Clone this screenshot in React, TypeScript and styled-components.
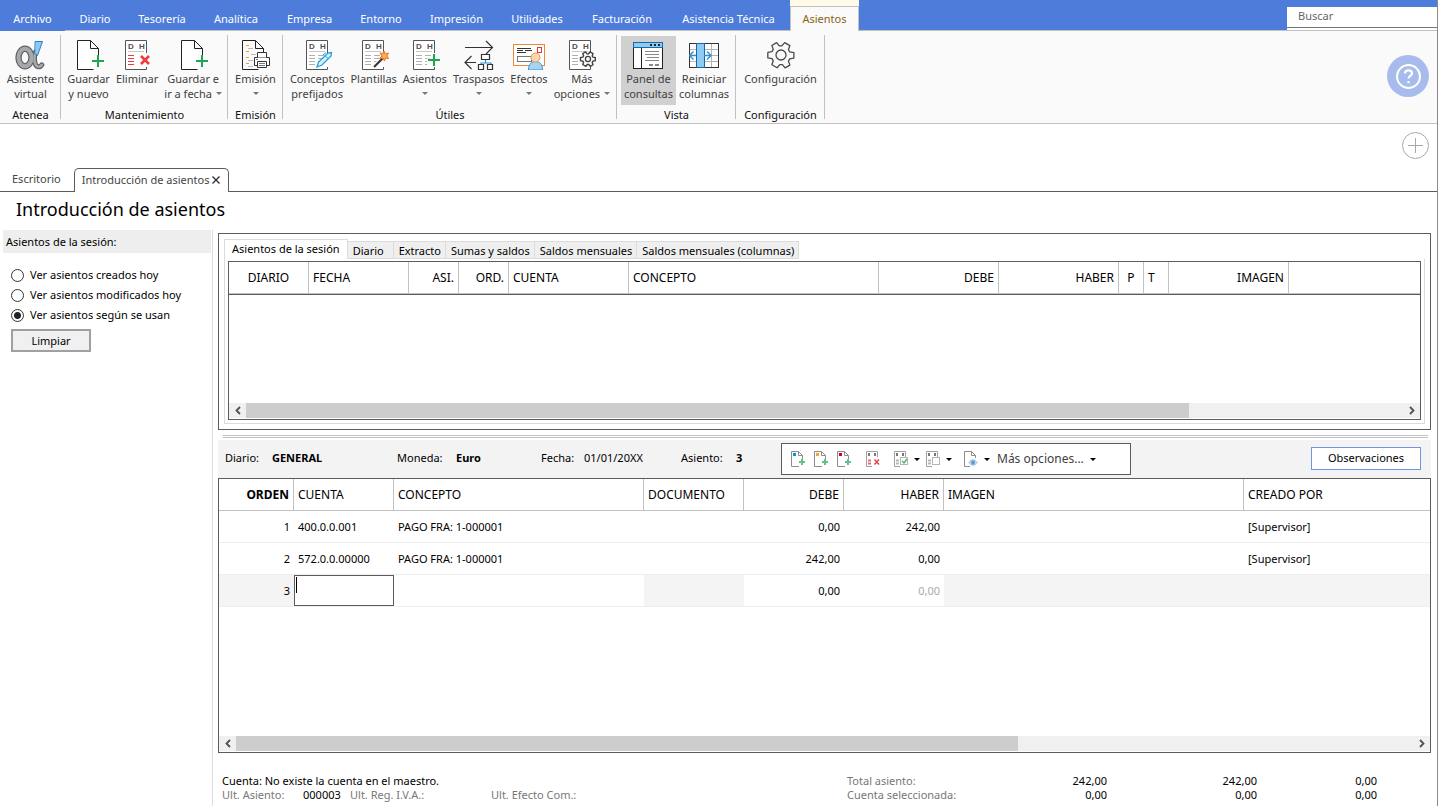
import React, { useState } from "react";
import styled, { createGlobalStyle, css } from "styled-components";

const FONT = '"Noto Sans", "Open Sans", sans-serif';
const BLUE = "#4d7cdb";
const DARK = "#5c5c5c";
const LINE = "#c1c1c1";
const SOFT = "#dcdcdc";

const Global = createGlobalStyle`
  * { box-sizing: border-box; }
  body { margin: 0; background: #fff; }
  button, input { font: inherit; color: inherit; }
  button { cursor: pointer; }
`;

const Page = styled.div`
  display: flex;
  flex-direction: column;
  min-height: 100vh;
  font: 11px/14px ${FONT};
  color: #000;
  background: #fff;
  border-right: 1px solid #8a8a8a;
  overflow: hidden;
`;

/* ---------- menu bar ---------- */

const MenuBar = styled.nav`
  display: flex;
  height: 31px;
  background: ${BLUE};
`;

const MenuTab = styled.button<{ $w: number; $file?: boolean }>`
  min-width: ${(p) => p.$w}px;
  border: 0;
  border-bottom: 1px solid ${(p) => (p.$file ? BLUE : LINE)};
  background: none;
  color: #fff;
  padding: 8px 12px 0;
  white-space: nowrap;
`;

const MenuSpace = styled.div`
  flex: 1;
  border-bottom: 1px solid ${LINE};
`;

const ActiveMenu = styled.div`
  display: flex;
  padding-top: 6px;
  background: #fffbe8;
`;

const ActiveTab = styled.button`
  min-width: 69px;
  border: 1px solid ${LINE};
  border-bottom: 0;
  background: #fafafa;
  color: #8a6414;
  padding: 0 11px;
`;

const SearchWrap = styled.div`
  width: 150px;
  padding-top: 7px;
  border-bottom: 1px solid ${LINE};
`;

const SearchInput = styled.input`
  display: block;
  width: 100%;
  height: 21px;
  border: 0;
  border-bottom: 1px solid #777;
  padding: 0 11px 3px;
  background: #fff;
  box-shadow: 0 2px 0 #fff;
  outline: 0;
  &::placeholder { color: #666; opacity: 1; }
`;

/* ---------- ribbon ---------- */

const Ribbon = styled.div`
  display: flex;
  height: 93px;
  background: #fafafa;
  border-bottom: 1px solid ${LINE};
`;

const Group = styled.section<{ $w: number }>`
  position: relative;
  display: flex;
  flex-direction: column;
  align-items: center;
  min-width: ${(p) => p.$w}px;
  padding: 5px 3px 0;
  &::after {
    content: "";
    position: absolute;
    right: 0;
    top: 4px;
    width: 1px;
    height: 84px;
    background: ${LINE};
  }
`;

const GroupButtons = styled.div`
  display: flex;
`;

const GroupName = styled.div`
  margin-top: 3px;
  color: #111;
  white-space: nowrap;
`;

const RibbonButton = styled.button<{ $on?: boolean }>`
  display: flex;
  flex-direction: column;
  align-items: center;
  height: 69px;
  border: 0;
  padding: 4px 3px 0;
  background: ${(p) => (p.$on ? "#d0d0d0" : "none")};
  color: #404040;
  line-height: 15px;
  white-space: nowrap;
`;

const IconBox = styled.span`
  display: flex;
  align-items: center;
  height: 30px;
  margin-bottom: 1px;
  svg { display: block; }
`;

const TextLine = styled.span`
  display: flex;
  align-items: center;
  gap: 4px;
  height: 15px;
`;

const Caret = styled.i<{ $c?: string }>`
  border: 3px solid transparent;
  border-top-color: ${(p) => p.$c || "#777"};
  border-bottom: 0;
`;

const Help = styled.button`
  align-self: center;
  margin: 0 8px 2px auto;
  width: 42px;
  height: 42px;
  padding: 0;
  border: 0;
  border-radius: 50%;
  background: #a7bcec;
  svg { display: block; margin: auto; }
`;

/* ---------- document tabs ---------- */

const AddRow = styled.div`
  display: flex;
  justify-content: flex-end;
  height: 44px;
  padding: 8px 8px 0;
`;

const AddButton = styled.button`
  width: 27px;
  height: 27px;
  padding: 0;
  border: 0;
  background: none;
  svg { display: block; }
`;

const DocTabs = styled.div`
  display: flex;
  height: 24px;
  color: #444;
`;

const DocTab = styled.button<{ $on?: boolean }>`
  display: flex;
  align-items: center;
  gap: 3px;
  padding: 0 13px 1px 12px;
  border: 0;
  border-bottom: 1px solid ${DARK};
  background: #fff;
  white-space: nowrap;
  ${(p) =>
    p.$on &&
    css`
      border: 1px solid ${DARK};
      border-bottom: 0;
      border-radius: 5px 5px 0 0;
      padding: 0 8px 2px 7px;
    `}
`;

const DocFill = styled.div`
  flex: 1;
  border-bottom: 1px solid ${DARK};
`;

const Title = styled.h1`
  margin: 0;
  padding: 5px 16px 9px;
  font-size: 18px;
  line-height: 24px;
  font-weight: 400;
`;

/* ---------- body ---------- */

const Body = styled.div`
  flex: 1;
  display: flex;
`;

const Side = styled.aside`
  width: 213px;
  flex: none;
  border-right: 1px solid ${SOFT};
  padding: 0 1px 0 3px;
`;

const SideTitle = styled.div`
  height: 23px;
  padding: 5px 3px;
  background: #eee;
  margin-bottom: 12px;
`;

const RadioLabel = styled.label`
  display: flex;
  align-items: center;
  gap: 6px;
  height: 20px;
  padding-left: 8px;
`;

const Radio = styled.input`
  appearance: none;
  width: 13px;
  height: 13px;
  margin: 0;
  border: 1px solid #333;
  border-radius: 50%;
  background: #fff;
  &:checked { background: radial-gradient(circle, #222 0 3px, #fff 4px); }
`;

const Clear = styled.button`
  display: block;
  width: 80px;
  height: 23px;
  margin: 4px 8px;
  padding: 0;
  border: 2px solid #a0a0a0;
  background: #f0f0f0;
`;

const Main = styled.main`
  flex: 1;
  min-width: 0;
  display: flex;
  flex-direction: column;
  padding: 3px 6px 4px 5px;
`;

const Panel = styled.section`
  display: flex;
  flex-direction: column;
  height: 197px;
  border: 1px solid ${DARK};
  padding: 5px;
`;

const PanelTabs = styled.div`
  display: flex;
  align-items: flex-end;
  height: 20px;
`;

const PanelTab = styled.button<{ $on?: boolean }>`
  height: 18px;
  padding: 1px 4px 0 5px;
  border: 1px solid ${SOFT};
  border-left: 0;
  background: #efefef;
  white-space: nowrap;
  min-width: 46px;
  text-align: left;
  ${(p) =>
    p.$on &&
    css`
      height: 20px;
      padding: 0 7px 2px;
      border-left: 1px solid ${SOFT};
      border-bottom: 0;
      background: #fff;
    `}
`;

const PanelPage = styled.div`
  flex: 1;
  display: flex;
  border: 1px solid ${SOFT};
  border-top: 0;
  padding: 2px 3px 3px;
  min-width: 0;
`;

const Grid = styled.div`
  flex: 1;
  min-width: 0;
  display: flex;
  flex-direction: column;
  border: 1px solid ${DARK};
  background: #fff;
`;

const GridView = styled.div`
  flex: 1;
  overflow: hidden;
`;

const Table = styled.table<{ $dark?: boolean }>`
  width: 100%;
  table-layout: fixed;
  border-collapse: separate;
  border-spacing: 0;
  line-height: 16px;
  thead th { box-shadow: ${(p) => (p.$dark ? `0 1px 0 ${DARK}` : "none")}; }
`;

type Align = "left" | "right" | "center";

const Th = styled.th<{ $a?: Align; $bold?: boolean }>`
  height: 32px;
  padding: 0 4px;
  border-bottom: 1px solid ${LINE};
  border-right: 1px solid ${LINE};
  text-align: ${(p) => p.$a || "left"};
  font-size: 12px;
  font-weight: ${(p) => (p.$bold ? 700 : 400)};
  white-space: nowrap;
  &:last-child { border-right: 0; }
`;

const Td = styled.td<{ $a?: Align; $bg?: string; $flush?: boolean; $dim?: boolean }>`
  height: 32px;
  padding: ${(p) => (p.$flush ? "0" : "0 4px")};
  border-bottom: 1px solid #eee;
  text-align: ${(p) => p.$a || "left"};
  background: ${(p) => p.$bg || "#fff"};
  color: ${(p) => (p.$dim ? "#aaa" : "#000")};
  white-space: nowrap;
`;

const CellEdit = styled.div`
  display: flex;
  height: 31px;
  border: 1px solid ${DARK};
  padding: 1px;
`;

const TextCursor = styled.span`
  width: 1px;
  height: 16px;
  background: #000;
`;

const CellInput = styled.input`
  flex: 1;
  min-width: 0;
  border: 0;
  padding: 0;
  outline: 0;
`;

const Scroll = styled.div`
  display: flex;
  height: 16px;
  background: #f0f0f0;
  border-bottom: 1px solid #fff;
`;

const ScrollButton = styled.button`
  width: 17px;
  padding: 0;
  border: 0;
  background: none;
  svg { display: block; margin: auto; }
`;

const Track = styled.div`
  flex: 1;
`;

const Thumb = styled.div<{ $w: number }>`
  width: ${(p) => p.$w}%;
  height: 100%;
  background: #cdcdcd;
`;

const Splitter = styled.div`
  height: 3px;
  margin: 5px 3px 2px 5px;
  border: 1px solid ${LINE};
  border-width: 1px 0;
`;

const EntryBar = styled.div`
  display: grid;
  grid-template-columns: 47px 125px 59px 85px 43px 97px 55px 45px 350px 1fr;
  align-items: center;
  height: 38px;
  padding: 0 10px 2px 7px;
  background: #f3f3f3;
`;

const FieldName = styled.span``;

const FieldValue = styled.output<{ $plain?: boolean }>`
  font-weight: ${(p) => (p.$plain ? 400 : 700)};
`;

const Tools = styled.div`
  display: flex;
  align-items: center;
  height: 32px;
  margin-top: 2px;
  border: 1px solid ${DARK};
  background: #fff;
  padding-left: 9px;
`;

const Tool = styled.button<{ $gap: number }>`
  display: flex;
  align-items: center;
  gap: 6px;
  padding: 0;
  border: 0;
  background: none;
  margin-right: ${(p) => p.$gap}px;
  font-size: 12px;
  color: #404040;
  white-space: nowrap;
  svg { display: block; }
`;

const Notes = styled.button`
  justify-self: end;
  width: 110px;
  height: 23px;
  border: 1px solid #6f95e3;
  background: #fff;
  padding: 0;
`;

const Footer = styled.footer`
  display: grid;
  grid-template-columns: 81px 47px 141px 1fr 110px 150px 150px 120px;
  padding: 21px 54px 0 4px;
  color: #777;
`;

const Message = styled.span`
  grid-column: 1 / 5;
  color: #000;
`;

const Amount = styled.span`
  color: #000;
  text-align: right;
`;

const Black = styled.span`
  color: #000;
`;

/* ---------- drawings ---------- */

const G = "#1da653";
const K = "#404040";

const AlphaIcon = () => (
  <svg width="32" height="30" viewBox="0 0 32 30" fill="none" strokeLinecap="round">
    <g stroke="#5f6264">
      <ellipse cx="10" cy="17.500" rx="6.500" ry="8.800" strokeWidth="6.400" />
      <path d="M20.500 12c-1.500 5-1.500 8-.2 12 1 3 4.500 4 6.500.8" strokeWidth="5" />
    </g>
    <g stroke="#a6a9ab">
      <ellipse cx="10" cy="17.500" rx="6.500" ry="8.800" strokeWidth="4" />
      <path d="M20.500 12c-1.500 5-1.500 8-.2 12 1 3 4.500 4 6.500.8" strokeWidth="2.600" />
    </g>
    <path d="M20.500 1.500h7L22.500 15.500l-2.500-2z" fill="#8cc8f3" stroke="#2c7fbd" strokeLinejoin="round" />
  </svg>
);

const PageShape = ({ c = "#222" }: { c?: string }) => (
  <path d="M16.500 29.500H.5V.5h13l8 8V17M13.500.5v8h8" fill="none" stroke={c} />
);

const NewDocIcon = () => (
  <svg width="32" height="30" viewBox="-4 0 32 30">
    <rect x="1" y="1" width="16" height="28" fill="#fff" />
    <PageShape />
    <path d="M21 15v12M15 21h12" stroke={G} strokeWidth="2" />
  </svg>
);

const Ledger = ({ lines = "#b0b0b0" }: { lines?: string }) => (
  <>
    <rect x="1" y="1" width="20" height="28" fill="#fff" />
    <path d="M21.500 13V.5H.5v29h21V27" fill="none" stroke="#555" />
    <path d="M3 11.500h16" stroke="#c8c8c8" />
    <text x="3" y="9" fontSize="8" fontWeight="700" fontFamily='"Liberation Sans", sans-serif' fill="#505050">D</text>
    <text x="14" y="9" fontSize="8" fontWeight="700" fontFamily='"Liberation Sans", sans-serif' fill="#505050">H</text>
    <path d="M3 15.500h6M3 18.500h6M3 21.500h6M3 24.500h6" stroke={lines} />
  </>
);

const DeleteIcon = () => (
  <svg width="28" height="30" viewBox="-2 0 28 30">
    <Ledger lines="#ee3b3b" />
    <rect x="14" y="13" width="10" height="14" fill="#fafafa" />
    <path d="M16 16l8 8M24 16l-8 8" stroke="#ee3b3b" strokeWidth="2.600" />
  </svg>
);

const RightLines = () => <path d="M12 15.500h6M12 18.500h5M12 21.500h3M12 24.500h2" stroke="#b0b0b0" />;

const ConceptIcon = () => (
  <svg width="31" height="30" viewBox="-4 0 31 30">
    <Ledger />
    <RightLines />
    <path d="M11 27l1.500-5L22 13l3.500-.5-.5 3.500-9 9z" fill="#d8f0fd" stroke="#1f9fdc" strokeWidth="1.300" />
    <path d="M19 15.500l3.500 3.500M20 12.500l-3 2.500" stroke="#1f9fdc" />
  </svg>
);

const TemplateIcon = () => (
  <svg width="31" height="30" viewBox="-4 0 31 30">
    <Ledger />
    <RightLines />
    <path d="M12 27L21 18.500" stroke="#fafafa" strokeWidth="5" />
    <path d="M12 27L20.500 18.500" stroke="#333" strokeWidth="2" />
    <path d="M22 11l1.500 3 3-1-1.500 3 1.500 2.500-3-.5-1 3-1.500-3-3.500.5 2.500-2.500-2-3 3 .5z" fill="#fbb04a" stroke="#e8702a" />
  </svg>
);

const EntryIcon = () => (
  <svg width="31" height="30" viewBox="-4 0 31 30">
    <Ledger />
    <RightLines />
    <path d="M21 13v14M14 20.500h13" stroke="#fafafa" strokeWidth="4" />
    <path d="M21 14v12M15 20h12" stroke={G} strokeWidth="2" />
  </svg>
);

const TransferIcon = () => (
  <svg width="30" height="30" viewBox="0 0 30 30" fill="none" stroke="#333" strokeWidth="1.200">
    <path d="M1 7.500h27M22 1l6.500 6.500L22 14M7.500 16L1 22.500 7.500 29M1 22.500h11" />
    <path d="M21.500 20v3M17 24.500v-1.500h10v1.500" stroke="#2a8fd0" />
    <path d="M17.500 14.500h8v5h-8zM14.500 24.500h5v5h-5zM23.500 24.500h5v5h-5z" fill="#fff" />
  </svg>
);

const EffectsIcon = () => (
  <svg width="32" height="30" viewBox="0 0 32 30" fill="none">
    <rect x=".5" y="4.500" width="31" height="21" fill="#fff" stroke="#e98a35" />
    <path d="M4 8.500h14M4 10.500h6M12 10.500h7M4 12.500h9" stroke="#333" />
    <rect x="4.500" y="16.500" width="14" height="5" stroke="#777" />
    <rect x="24.500" y="7.500" width="4" height="5" stroke="#e33" />
    <path d="M15.500 30c0-6 3-8.500 7-8.500s7 2.500 7 8.500z" fill="#a9d3f3" stroke="#3c94d4" />
    <circle cx="22.500" cy="17.500" r="4.500" fill="#fbd7ac" stroke="#e0995b" />
  </svg>
);

const GEAR =
  "M11 1.500h6l.8 4.200 2.200 1.300 4-1.500 2.700 4.800-3.200 2.700v2.600l3.200 2.700-2.700 4.800-4-1.500-2.200 1.300-.8 4.100h-6l-.8-4.100-2.200-1.300-4 1.500-2.700-4.800 3.200-2.700v-2.600L1.300 10.300 4 5.500 8 7l2.200-1.300z";

const ConfigIcon = () => (
  <svg width="28" height="28" viewBox="0 0 28 28" fill="none" stroke="#4a4a4a" strokeWidth="1.300" strokeLinejoin="round">
    <path d={GEAR} transform="rotate(30 14 14)" />
    <circle cx="14" cy="14" r="5" />
  </svg>
);

const MoreIcon = () => (
  <svg width="29" height="30" viewBox="-2 0 29 30">
    <Ledger />
    <g transform="translate(11 11) scale(.57)">
      <path d={GEAR} transform="rotate(30 14 14)" fill="#fafafa" stroke={K} strokeWidth="2.400" />
      <circle cx="14" cy="14" r="4.500" fill="none" stroke={K} strokeWidth="2.200" />
    </g>
  </svg>
);

const PrintIcon = () => (
  <svg width="28" height="30" viewBox="0 0 28 30" fill="none">
    <PageShape />
    <path d="M4 5.500h3M4 11.500h3M4 17.500h3M4 23.500h3" stroke="#ee9a2e" />
    <path d="M6 8.500h5M9 14.500h5M6 20.500h5M6 26.500h5" stroke="#bbb" />
    <path d="M12.500 17.500h15v8h-15z" fill="#fff" stroke="#333" />
    <path d="M15.500 17.500v-5h9v5M15.500 21.500h9v6h-9z" fill="#fff" stroke="#333" />
    <path d="M17 23.500h6M17 25.500h6" stroke="#777" />
    <path d="M14 19.500h2" stroke="#2a8fd0" />
  </svg>
);

const PanelIcon = () => (
  <svg width="30" height="27" viewBox="0 0 30 27" fill="none">
    <rect x=".5" y=".5" width="29" height="26" fill="#fff" stroke="#222" />
    <rect x=".5" y=".5" width="29" height="5" fill="#8dcbf3" stroke="#1867ab" />
    <path d="M17 3h2M21 3h2M25 3h2" stroke="#222" strokeWidth="2" />
    <path d="M8.500 6v20" stroke="#222" />
    <path d="M12 9.500h14M12 12.500h14M14 15.500h12M12 18.500h14" stroke="#888" />
    <path d="M16 23h4M22 23h4" stroke="#888" strokeWidth="2" />
  </svg>
);

const ColumnsIcon = () => (
  <svg width="30" height="27" viewBox="0 0 30 27" fill="none">
    <rect x=".5" y="1.500" width="29" height="24" fill="#fff" stroke="#333" />
    <path d="M1 7.500h28M1 13.500h28M1 19.500h28M22.500 2v23" stroke="#b5b5b5" />
    <rect x="7.500" y="1.500" width="8" height="24" fill="#8dcbf3" stroke="#1867ab" />
    <path d="M7 13.500H1M4.500 9.500l-4 4 4 4M15 13.500h6M18 9.500l4 4-4 4" stroke="#2a8fd0" strokeWidth="1.400" />
  </svg>
);

const HelpIcon = () => (
  <svg width="27" height="27" viewBox="0 0 27 27" fill="none" stroke="#fff">
    <circle cx="13.500" cy="13.500" r="11.500" strokeWidth="2" />
    <path d="M10 10.500c0-2 1.500-3.200 3.500-3.200s3.500 1.200 3.500 3c0 2.700-3.500 2.500-3.500 5.200" strokeWidth="2.200" />
    <path d="M13.500 18v2.200" strokeWidth="2.200" />
  </svg>
);

const SmallNew = ({ c }: { c: string }) => (
  <svg width="14" height="16" viewBox="0 0 14 16" fill="none">
    <path d="M8 15.500H.5V.5h7l4 4V8M7.500.5v4h4" stroke="#8c8c8c" />
    <rect x="2" y="2" width="3" height="3" fill={c} />
    <path d="M11 8v6M8 11h6" stroke="#63c08a" strokeWidth="2" />
  </svg>
);

const SmallLedger = ({ red, children }: { red?: boolean; children: React.ReactNode }) => (
  <svg width="14" height="16" viewBox="0 0 14 16" fill="none">
    <path d="M6 15.500H.5V.5h11V6" stroke="#a0a0a0" />
    <path d="M3 2v3M9 2v3" stroke="#777" strokeWidth="2" />
    <path d="M2 9.500h3M2 12.500h3" stroke={red ? "#ee6a6a" : "#b5b5b5"} strokeWidth="2" />
    {children}
  </svg>
);

const EyeIcon = () => (
  <svg width="14" height="16" viewBox="0 0 14 16" fill="none">
    <path d="M6 15.500H.5V.5h7l4 4V7M7.500.5v4h4" stroke="#8c8c8c" />
    <path d="M5 11.500c2-3.500 6-3.500 8 0-2 3.500-6 3.500-8 0z" fill="#cfe3f4" stroke="#8fb6d8" />
    <circle cx="9" cy="11.500" r="2" fill="#5b9bd0" />
  </svg>
);

const Arrow = ({ right }: { right?: boolean }) => (
  <svg width="8" height="9" viewBox="0 0 8 9" fill="none" stroke="#505050" strokeWidth="1.800">
    <path d={right ? "M2 1l3.500 3.500L2 8" : "M6 1L2.500 4.500 6 8"} />
  </svg>
);

/* ---------- pieces ---------- */

interface CommandProps {
  icon: React.ReactNode;
  lines: string[];
  menu?: boolean;
  on?: boolean;
}

const Command = ({ icon, lines, menu, on }: CommandProps) => (
  <RibbonButton $on={on} aria-pressed={on}>
    <IconBox>{icon}</IconBox>
    {lines.map((l, i) => (
      <TextLine key={l}>
        {l}
        {menu && i === 1 && <Caret />}
      </TextLine>
    ))}
    {menu && lines.length === 1 && (
      <TextLine>
        <Caret />
      </TextLine>
    )}
  </RibbonButton>
);

const RibbonGroup = ({ name, w, children }: { name: string; w: number; children: React.ReactNode }) => (
  <Group $w={w} aria-label={name}>
    <GroupButtons>{children}</GroupButtons>
    <GroupName>{name}</GroupName>
  </Group>
);

const HScroll = ({ thumb }: { thumb: number }) => (
  <Scroll>
    <ScrollButton aria-label="Desplazar a la izquierda">
      <Arrow />
    </ScrollButton>
    <Track>
      <Thumb $w={thumb} />
    </Track>
    <ScrollButton aria-label="Desplazar a la derecha">
      <Arrow right />
    </ScrollButton>
  </Scroll>
);

interface Column {
  name: string;
  w?: number;
  a?: Align;
  bold?: boolean;
}

const Head = ({ cols }: { cols: Column[] }) => (
  <>
    <colgroup>
      {cols.map((c, i) => (
        <col key={i} width={c.w} />
      ))}
    </colgroup>
    <thead>
      <tr>
        {cols.map((c, i) => (
          <Th key={i} $a={c.a} $bold={c.bold}>
            {c.name}
          </Th>
        ))}
      </tr>
    </thead>
  </>
);

const MENUS = [
  { name: "Diario", w: 60 },
  { name: "Tesorería", w: 74 },
  { name: "Analítica", w: 74 },
  { name: "Empresa", w: 73 },
  { name: "Entorno", w: 70 },
  { name: "Impresión", w: 81 },
  { name: "Utilidades", w: 80 },
  { name: "Facturación", w: 90 },
  { name: "Asistencia Técnica", w: 123 },
];

const QUERY_TABS = ["Asientos de la sesión", "Diario", "Extracto", "Sumas y saldos", "Saldos mensuales", "Saldos mensuales (columnas)"];

const QUERY_COLS: Column[] = [
  { name: "DIARIO", w: 80, a: "center" },
  { name: "FECHA", w: 100 },
  { name: "ASI.", w: 50, a: "right" },
  { name: "ORD.", w: 50, a: "right" },
  { name: "CUENTA", w: 120 },
  { name: "CONCEPTO", w: 250 },
  { name: "DEBE", w: 120, a: "right" },
  { name: "HABER", w: 120, a: "right" },
  { name: "P", w: 25, a: "center" },
  { name: "T", w: 25 },
  { name: "IMAGEN", w: 120, a: "right" },
  { name: "" },
];

const ENTRY_COLS: Column[] = [
  { name: "ORDEN", w: 75, a: "right", bold: true },
  { name: "CUENTA", w: 100 },
  { name: "CONCEPTO", w: 250 },
  { name: "DOCUMENTO", w: 100 },
  { name: "DEBE", w: 100, a: "right" },
  { name: "HABER", w: 100, a: "right" },
  { name: "IMAGEN", w: 300 },
  { name: "CREADO POR" },
];

const ROWS = [
  { n: 1, account: "400.0.0.001", text: "PAGO FRA: 1-000001", debit: "0,00", credit: "242,00" },
  { n: 2, account: "572.0.0.00000", text: "PAGO FRA: 1-000001", debit: "242,00", credit: "0,00" },
];

const FILTERS = ["Ver asientos creados hoy", "Ver asientos modificados hoy", "Ver asientos según se usan"];

const GREY = "#f4f4f4";

export default function App() {
  const [filter, setFilter] = useState(2);

  return (
    <Page>
      <Global />
      <MenuBar>
        <MenuTab $w={65} $file>
          Archivo
        </MenuTab>
        {MENUS.map((m) => (
          <MenuTab key={m.name} $w={m.w}>
            {m.name}
          </MenuTab>
        ))}
        <ActiveMenu>
          <ActiveTab>Asientos</ActiveTab>
        </ActiveMenu>
        <MenuSpace />
        <SearchWrap>
          <SearchInput type="search" placeholder="Buscar" aria-label="Buscar" />
        </SearchWrap>
      </MenuBar>

      <Ribbon>
        <RibbonGroup name="Atenea" w={61}>
          <Command icon={<AlphaIcon />} lines={["Asistente", "virtual"]} />
        </RibbonGroup>
        <RibbonGroup name="Mantenimiento" w={167}>
          <Command icon={<NewDocIcon />} lines={["Guardar", "y nuevo"]} />
          <Command icon={<DeleteIcon />} lines={["Eliminar"]} />
          <Command icon={<NewDocIcon />} lines={["Guardar e", "ir a fecha"]} menu />
        </RibbonGroup>
        <RibbonGroup name="Emisión" w={55}>
          <Command icon={<PrintIcon />} lines={["Emisión"]} menu />
        </RibbonGroup>
        <RibbonGroup name="Útiles" w={334}>
          <Command icon={<ConceptIcon />} lines={["Conceptos", "prefijados"]} />
          <Command icon={<TemplateIcon />} lines={["Plantillas"]} />
          <Command icon={<EntryIcon />} lines={["Asientos"]} menu />
          <Command icon={<TransferIcon />} lines={["Traspasos"]} menu />
          <Command icon={<EffectsIcon />} lines={["Efectos"]} menu />
          <Command icon={<MoreIcon />} lines={["Más", "opciones"]} menu />
        </RibbonGroup>
        <RibbonGroup name="Vista" w={119}>
          <Command icon={<PanelIcon />} lines={["Panel de", "consultas"]} on />
          <Command icon={<ColumnsIcon />} lines={["Reiniciar", "columnas"]} />
        </RibbonGroup>
        <RibbonGroup name="Configuración" w={89}>
          <Command icon={<ConfigIcon />} lines={["Configuración"]} />
        </RibbonGroup>
        <Help aria-label="Ayuda">
          <HelpIcon />
        </Help>
      </Ribbon>

      <AddRow>
        <AddButton aria-label="Añadir">
          <svg width="27" height="27" viewBox="0 0 27 27" fill="none" stroke="#a8a8a8">
            <circle cx="13.500" cy="13.500" r="13" />
            <path d="M13.500 6v15M6 13.500h15" />
          </svg>
        </AddButton>
      </AddRow>
      <DocTabs>
        <DocTab>Escritorio</DocTab>
        <DocTab $on>
          Introducción de asientos
          <svg width="8" height="8" viewBox="0 0 8 8" stroke="#333" strokeWidth="1.400">
            <path d="M.5.5l7 7M7.500.5l-7 7" />
          </svg>
        </DocTab>
        <DocFill />
      </DocTabs>
      <Title>Introducción de asientos</Title>

      <Body>
        <Side>
          <SideTitle>Asientos de la sesión:</SideTitle>
          {FILTERS.map((f, i) => (
            <RadioLabel key={f}>
              <Radio type="radio" name="filtro" checked={filter === i} onChange={() => setFilter(i)} />
              {f}
            </RadioLabel>
          ))}
          <Clear>Limpiar</Clear>
        </Side>

        <Main>
          <Panel>
            <PanelTabs>
              {QUERY_TABS.map((t, i) => (
                <PanelTab key={t} $on={i === 0}>
                  {t}
                </PanelTab>
              ))}
            </PanelTabs>
            <PanelPage>
              <Grid>
                <GridView>
                  <Table $dark>
                    <Head cols={QUERY_COLS} />
                  </Table>
                </GridView>
                <HScroll thumb={81.5} />
              </Grid>
            </PanelPage>
          </Panel>
          <Splitter />
          <EntryBar>
            <FieldName>Diario:</FieldName>
            <FieldValue>GENERAL</FieldValue>
            <FieldName>Moneda:</FieldName>
            <FieldValue>Euro</FieldValue>
            <FieldName>Fecha:</FieldName>
            <FieldValue $plain>01/01/20XX</FieldValue>
            <FieldName>Asiento:</FieldName>
            <FieldValue>3</FieldValue>
            <Tools>
              <Tool $gap={9} aria-label="Nuevo apunte azul">
                <SmallNew c="#0a94dc" />
              </Tool>
              <Tool $gap={9} aria-label="Nuevo apunte amarillo">
                <SmallNew c="#f5a623" />
              </Tool>
              <Tool $gap={15} aria-label="Nuevo apunte rojo">
                <SmallNew c="#d6001c" />
              </Tool>
              <Tool $gap={14} aria-label="Eliminar apunte">
                <SmallLedger red>
                  <path d="M8.500 8.500l4.500 5M13 8.500l-4.500 5" stroke="#e04a4a" strokeWidth="1.600" />
                </SmallLedger>
              </Tool>
              <Tool $gap={6} aria-label="Marcar">
                <SmallLedger>
                  <rect x="6.500" y="6.500" width="7" height="7" fill="#fff" stroke="#b5b5b5" />
                  <path d="M8 10l2 2 3-4" stroke="#43b06c" strokeWidth="1.300" />
                </SmallLedger>
                <Caret $c="#000" />
              </Tool>
              <Tool $gap={12} aria-label="Desmarcar">
                <SmallLedger>
                  <rect x="6.500" y="6.500" width="7" height="7" fill="#fff" stroke="#b5b5b5" />
                </SmallLedger>
                <Caret $c="#000" />
              </Tool>
              <Tool $gap={7} aria-label="Ver documento">
                <EyeIcon />
                <Caret $c="#000" />
              </Tool>
              <Tool $gap={0}>
                Más opciones...
                <Caret $c="#000" />
              </Tool>
            </Tools>
            <Notes>Observaciones</Notes>
          </EntryBar>

          <Grid>
            <GridView>
              <Table>
                <Head cols={ENTRY_COLS} />
                <tbody>
                  {ROWS.map((r) => (
                    <tr key={r.n}>
                      <Td $a="right">{r.n}</Td>
                      <Td>{r.account}</Td>
                      <Td>{r.text}</Td>
                      <Td />
                      <Td $a="right">{r.debit}</Td>
                      <Td $a="right">{r.credit}</Td>
                      <Td />
                      <Td>[Supervisor]</Td>
                    </tr>
                  ))}
                  <tr>
                    <Td $a="right" $bg={GREY}>3</Td>
                    <Td $flush>
                      <CellEdit>
                        <TextCursor />
                        <CellInput aria-label="Cuenta" />
                      </CellEdit>
                    </Td>
                    <Td />
                    <Td $bg={GREY} />
                    <Td $a="right">0,00</Td>
                    <Td $a="right" $dim>0,00</Td>
                    <Td $bg={GREY} />
                    <Td $bg={GREY} />
                  </tr>
                </tbody>
              </Table>
            </GridView>
            <HScroll thumb={66.4} />
          </Grid>

          <Footer>
            <Message>Cuenta: No existe la cuenta en el maestro.</Message>
            <span>Total asiento:</span>
            <Amount>242,00</Amount>
            <Amount>242,00</Amount>
            <Amount>0,00</Amount>
            <span>Ult. Asiento:</span>
            <Black>000003</Black>
            <span>Ult. Reg. I.V.A.:</span>
            <span>Ult. Efecto Com.:</span>
            <span>Cuenta seleccionada:</span>
            <Amount>0,00</Amount>
            <Amount>0,00</Amount>
            <Amount>0,00</Amount>
          </Footer>
        </Main>
      </Body>
    </Page>
  );
}
